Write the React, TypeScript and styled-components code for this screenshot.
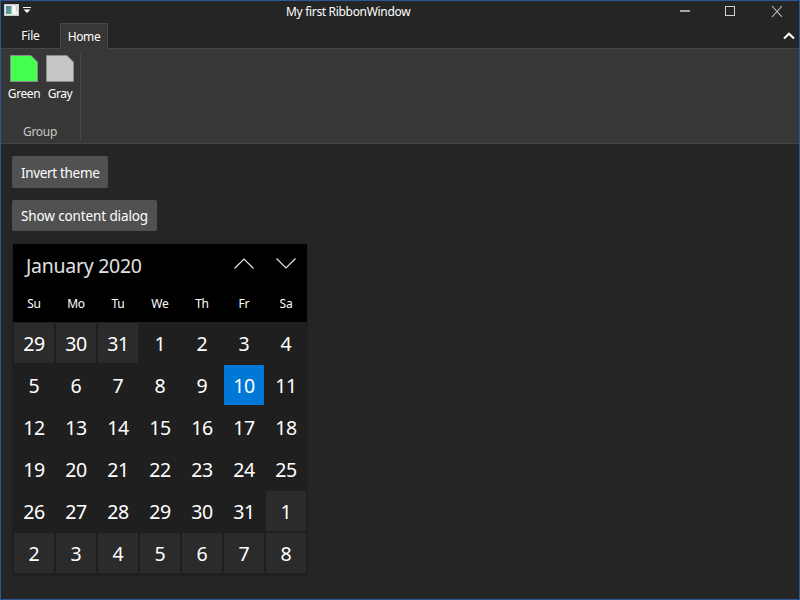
import React from 'react';
import styled, { createGlobalStyle, css } from 'styled-components';

const GlobalStyle = createGlobalStyle`
  * { box-sizing: border-box; }
  body {
    margin: 0;
    background: #252525;
    color: #fff;
    font-family: "Noto Sans", "Open Sans", sans-serif;
    font-size: 12px;
    overflow: hidden;
  }
`;

const Window = styled.div`
  width: 800px;
  height: 600px;
  border: 1px solid #2b579a;
  background: #252525;
  display: flex;
  flex-direction: column;
`;

const TitleBar = styled.header`
  height: 22px;
  display: grid;
  grid-template-columns: 1fr auto 1fr;
  align-items: start;
`;

const QuickAccess = styled.div`
  display: flex;
  padding: 3px 0 0 3px;
  gap: 4px;
`;

const Title = styled.h1`
  margin: 0;
  width: 126px;
  font-size: 12px;
  font-weight: 400;
  line-height: 22px;
  letter-spacing: -0.32px;
  white-space: nowrap;
  transform: translateX(-51px);
`;

const Controls = styled.div`
  display: flex;
  justify-content: flex-end;
  margin-right: -1px;
`;

const ControlButton = styled.button<{ $width?: number }>`
  width: ${p => p.$width ?? 46}px;
  height: 20px;
  padding: 0;
  border: 0;
  background: none;
  display: flex;
  align-items: center;
  justify-content: center;
`;

const TabStrip = styled.nav`
  height: 25px;
  display: flex;
  position: relative;
  z-index: 1;
`;

const FileTab = styled.div`
  width: 59px;
  line-height: 26px;
  text-align: center;
  letter-spacing: -0.2px;
`;

const ActiveTab = styled.div`
  width: 48px;
  height: 26px;
  border: 1px solid #464646;
  border-bottom: 0;
  background: #373737;
  line-height: 26px;
  text-align: center;
  letter-spacing: -0.4px;
  margin-bottom: -1px;
`;

const Collapse = styled.button`
  margin: 9px 2px 0 auto;
  width: 14px;
  height: 9px;
  padding: 0;
  border: 0;
  background: none;
  display: flex;
`;

const Ribbon = styled.section`
  height: 96px;
  border-top: 1px solid #464646;
  border-bottom: 1px solid #464646;
  background: #373737;
  display: flex;
  padding: 4px 0 3px 5px;
`;

const Group = styled.div`
  width: 75px;
  border-right: 1px solid #464646;
  display: flex;
  flex-direction: column;
`;

const GroupItems = styled.div`
  display: flex;
`;

const RibbonButton = styled.div`
  width: 36px;
  display: flex;
  flex-direction: column;
  align-items: center;
  padding-top: 2px;
  line-height: 20px;
  letter-spacing: -0.4px;

  svg { margin-bottom: 2px; }
`;

const GroupLabel = styled.div`
  margin-top: auto;
  width: 68px;
  text-align: center;
  line-height: 16px;
  color: #c8c8c8;
  letter-spacing: -0.3px;
`;

const Content = styled.main`
  padding: 12px 11px;
  display: flex;
  flex-direction: column;
  align-items: flex-start;
`;

const Button = styled.button<{ $width: number; $height: number; $tracking: number }>`
  width: ${p => p.$width}px;
  height: ${p => p.$height}px;
  margin: 0 0 12px;
  padding: 2px 0 0 9px;
  border: 0;
  border-radius: 2px;
  background: #515151;
  color: #fff;
  font: 13.5px/19px "Noto Sans", "Open Sans", sans-serif;
  letter-spacing: ${p => p.$tracking}px;
  text-align: left;
  white-space: nowrap;
`;

const Calendar = styled.section`
  width: 296px;
  height: 332px;
  border: 1px solid #202020;
  border-top: 0;
  border-radius: 2px;
  background: #1f1f1f;
  margin-top: 1px;
`;

const CalendarHead = styled.div`
  height: 78px;
  background: #000;
`;

const MonthRow = styled.div`
  height: 44px;
  display: flex;
  align-items: flex-start;
  padding-left: 13px;
`;

const Month = styled.div`
  width: 197px;
  color: #e0e0e0;
  font-size: 19.5px;
  line-height: 44px;
  letter-spacing: -0.28px;
`;

const NavButton = styled.button`
  width: 42px;
  height: 39px;
  padding: 0;
  border: 0;
  background: none;
  display: flex;
  align-items: center;
  justify-content: center;
`;

const Weekdays = styled.div`
  display: grid;
  grid-template-columns: repeat(7, 42px);
  text-align: center;
  line-height: 32px;
  letter-spacing: -0.2px;
`;

const Days = styled.div`
  display: grid;
  grid-template-columns: repeat(7, 40px);
  grid-auto-rows: 40px;
  gap: 2px;
  padding: 1px;
`;

const Day = styled.div<{ $kind: 'outside' | 'today' | 'plain' }>`
  font-size: 19.5px;
  line-height: 41px;
  letter-spacing: -0.3px;
  text-align: center;
  ${p => p.$kind === 'outside' && css`background: #2b2b2b;`}
  ${p => p.$kind === 'today' && css`background: #0078d7;`}
`;

const PageIcon = ({ fill }: { fill: string }) => (
  <svg width="28" height="27" viewBox="0 0 28 27">
    <path d="M.5 .5H21L27.5 7V26.5H.5Z" fill={fill} stroke="#8a8a8a" />
  </svg>
);

const weekdays = ['Su', 'Mo', 'Tu', 'We', 'Th', 'Fr', 'Sa'];
const cells = Array.from({ length: 42 }, (_, i) => {
  const n = i - 2;
  if (n < 1) return { day: n + 31, kind: 'outside' as const };
  if (n > 31) return { day: n - 31, kind: 'outside' as const };
  return { day: n, kind: n === 10 ? ('today' as const) : ('plain' as const) };
});

export default function App() {
  return (
    <>
      <GlobalStyle />
      <Window>
        <TitleBar>
          <QuickAccess>
            <svg width="15" height="12" viewBox="0 0 15 12">
              <defs>
                <linearGradient id="pane" x1="0" y1="0" x2="1" y2="1">
                  <stop offset="0" stopColor="#4f80a8" />
                  <stop offset="1" stopColor="#5fb080" />
                </linearGradient>
              </defs>
              <rect width="15" height="12" fill="#e9e9e9" />
              <rect x=".5" y=".5" width="14" height="11" fill="none" stroke="#c9c9c9" />
              <rect x="2" y="2" width="5.5" height="8" fill="url(#pane)" />
              <rect x="8.5" y="2" width="3" height="8" fill="#f8f8f8" />
              <rect x="12" y="2" width="1" height="5" fill="#c3c9d4" />
            </svg>
            <svg width="8" height="10" viewBox="0 0 8 10">
              <path d="M0 3.5H8" stroke="#fff" />
              <path d="M.5 5.5H7.5L4 9Z" fill="#fff" />
            </svg>
          </QuickAccess>
          <Title>My first RibbonWindow</Title>
          <Controls>
            <ControlButton aria-label="Minimize">
              <svg width="10" height="10"><path d="M0 5H10" stroke="#a6a6a6" strokeWidth="2" /></svg>
            </ControlButton>
            <ControlButton aria-label="Maximize" $width={44}>
              <svg width="10" height="10"><rect x=".5" y=".5" width="9" height="9" fill="none" stroke="#d0d0d0" /></svg>
            </ControlButton>
            <ControlButton aria-label="Close" $width={48}>
              <svg width="12" height="12"><path d="M2 1L12 12M12 1L2 12" stroke="#c0c0c0" strokeWidth="1.1" /></svg>
            </ControlButton>
          </Controls>
        </TitleBar>
        <TabStrip>
          <FileTab>File</FileTab>
          <ActiveTab>Home</ActiveTab>
          <Collapse aria-label="Collapse ribbon">
            <svg width="12" height="8"><path d="M1 6.5L6 1.7L11 6.5" fill="none" stroke="#fff" strokeWidth="2" /></svg>
          </Collapse>
        </TabStrip>
        <Ribbon>
          <Group>
            <GroupItems>
              <RibbonButton><PageIcon fill="#44ff4d" />Green</RibbonButton>
              <RibbonButton><PageIcon fill="#c6c6c6" />Gray</RibbonButton>
            </GroupItems>
            <GroupLabel>Group</GroupLabel>
          </Group>
        </Ribbon>
        <Content>
          <Button $width={96} $height={32} $tracking={-0.33}>Invert theme</Button>
          <Button $width={145} $height={31} $tracking={-0.12}>Show content dialog</Button>
          <Calendar>
            <CalendarHead>
              <MonthRow>
                <Month>January 2020</Month>
                <NavButton aria-label="Previous month">
                  <svg width="20" height="11"><path d="M.5 10.5L10 1L19.5 10.5" fill="none" stroke="#e6e6e6" strokeWidth="1.2" /></svg>
                </NavButton>
                <NavButton aria-label="Next month">
                  <svg width="20" height="11"><path d="M.5 .5L10 10L19.5 .5" fill="none" stroke="#e6e6e6" strokeWidth="1.2" /></svg>
                </NavButton>
              </MonthRow>
              <Weekdays>
                {weekdays.map(d => <span key={d}>{d}</span>)}
              </Weekdays>
            </CalendarHead>
            <Days>
              {cells.map((c, i) => <Day key={i} $kind={c.kind}>{c.day}</Day>)}
            </Days>
          </Calendar>
        </Content>
      </Window>
    </>
  );
}
